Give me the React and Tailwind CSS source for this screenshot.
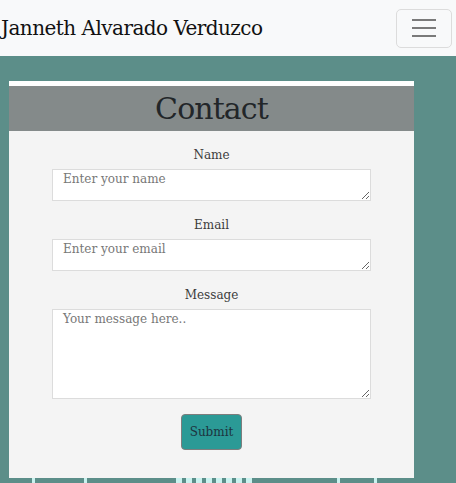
export default function App() {
  const serif = { fontFamily: '"DejaVu Serif", "Liberation Serif", serif' };
  return (
    <div className="h-[483px] w-[456px] overflow-hidden bg-[#5c8e89]" style={serif}>
      <nav className="flex h-14 items-center justify-between bg-[#f8f9fa] pr-[4px]">
        <span className="pl-px text-[20px] tracking-[-0.027em] text-[#111]">Janneth Alvarado Verduzco</span>
        <button className="flex h-[39px] w-[56px] flex-col items-center justify-center gap-[6px] rounded-[5px] border border-[#dcdcdc]">
          <span className="h-[2px] w-[24px] bg-[#7a7a7a]"></span>
          <span className="h-[2px] w-[24px] bg-[#7a7a7a]"></span>
          <span className="h-[2px] w-[24px] bg-[#7a7a7a]"></span>
        </button>
      </nav>
      <div className="pl-[9px] pt-[25px]">
        <div className="w-[405px] border-t-[5px] border-white bg-[#f4f4f4]">
          <div className="flex h-[45px] items-center justify-center bg-[#848a8a]">
            <h1 className="text-[30px] leading-none tracking-[-0.03em] text-[#222629]">Contact</h1>
          </div>
          <form className="flex flex-col items-center pb-[28px] pt-[14px] text-[#3c3c3c]">
            <label className="text-[12px] leading-[20px]">Name</label>
            <textarea className="mt-[4px] h-[32px] w-[319px] resize-y border border-[#dcdcdc] bg-white px-[10px] pt-[1px] text-[12px] leading-[16px] placeholder:text-[#777]" placeholder="Enter your name"></textarea>
            <label className="mt-[14px] text-[12px] leading-[20px]">Email</label>
            <textarea className="mt-[4px] h-[32px] w-[319px] resize-y border border-[#dcdcdc] bg-white px-[10px] pt-[1px] text-[12px] leading-[16px] placeholder:text-[#777]" placeholder="Enter your email"></textarea>
            <label className="mt-[14px] text-[12px] leading-[20px]">Message</label>
            <textarea className="mt-[4px] h-[90px] w-[319px] resize-y border border-[#dcdcdc] bg-white px-[10px] pt-[1px] text-[12px] leading-[16px] placeholder:text-[#777]" placeholder="Your message here.."></textarea>
            <button type="button" className="mt-[15px] h-[36px] w-[61px] rounded-[4px] border border-[#7d7d7d] bg-[#2b9a96] text-[12px] text-[#1d3440]">Submit</button>
          </form>
        </div>
        <div className="flex h-[6px] items-start">
          <span className="ml-[23px] h-[6px] w-[3px] bg-[#c9f2ef]"></span>
          <span className="ml-[49px] h-[6px] w-[3px] bg-[#c9f2ef]"></span>
          <span className="ml-[89px] h-[6px] w-[80px] bg-[repeating-linear-gradient(90deg,#c9f2ef_0_6px,transparent_6px_10px)]"></span>
          <span className="ml-[81px] h-[6px] w-[3px] bg-[#c9f2ef]"></span>
          <span className="ml-[34px] h-[6px] w-[3px] bg-[#c9f2ef]"></span>
        </div>
      </div>
    </div>
  );
}
